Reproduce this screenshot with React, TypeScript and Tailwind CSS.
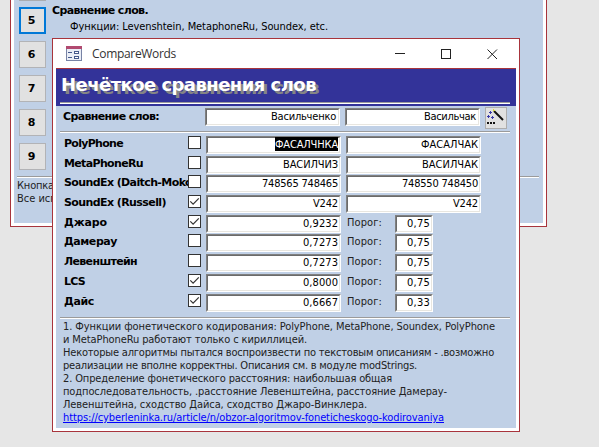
import { useLayoutEffect, useRef, type ReactNode } from 'react';

// A single line of text whose tracking is adjusted to fill the given width.
function Line({ w, children, className = '' }: { w: number; children: string; className?: string }) {
  const ref = useRef<HTMLSpanElement>(null);
  useLayoutEffect(() => {
    const el = ref.current;
    if (!el) return;
    el.style.letterSpacing = '0px';
    const natural = el.getBoundingClientRect().width;
    el.style.letterSpacing = `${(w - natural) / children.length}px`;
  }, [w, children]);
  return (
    <span ref={ref} className={`inline-block whitespace-pre ${className}`}>
      {children}
    </span>
  );
}

function Rule({ className = '' }: { className?: string }) {
  return <div className={`h-[2px] shrink-0 border-t border-[#9b9b9b] bg-white ${className}`} />;
}

function Field({ className, children }: { className: string; children: ReactNode }) {
  return (
    <div className={`h-[18px] shrink-0 border border-t-[#808080] border-l-[#808080] border-r-white border-b-white ${className}`}>
      <div className="flex h-full justify-end border border-t-[#6b6b6b] border-l-[#6b6b6b] border-r-[#e8e6e0] border-b-[#e8e6e0] bg-white pr-px leading-[14px]">
        {children}
      </div>
    </div>
  );
}

function Check({ on }: { on: boolean }) {
  return (
    <div className="h-[13px] w-[13px] shrink-0 border border-[#333] bg-white">
      {on && (
        <svg viewBox="0 0 11 11" className="block h-[11px] w-[11px]">
          <path d="M1.3 5.4 4.1 8.2 9.8 2.3" fill="none" stroke="#333" strokeWidth="1.2" />
        </svg>
      )}
    </div>
  );
}

type Item = {
  label: string;
  lw: number;
  on: boolean;
  value: string;
  vw: number;
  other?: string;
  ow?: number;
  threshold?: string;
  rowClass: string;
};

const items: Item[] = [
  { label: 'PolyPhone', lw: 59, on: false, value: 'ФАСАЛЧНКА', vw: 63, other: 'ФАСАЛЧАК', ow: 57, rowClass: 'h-[20px]' },
  { label: 'MetaPhoneRu', lw: 79, on: false, value: 'ВАСИЛЧИЗ', vw: 55, other: 'ВАСИЛЧАК', ow: 56, rowClass: 'h-[19px]' },
  { label: 'SoundEx (Daitch-Moko', lw: 128, on: false, value: '748565 748465', vw: 76, other: '748550 748450', ow: 76, rowClass: 'h-[20px]' },
  { label: 'SoundEx (Russell)', lw: 102, on: true, value: 'V242', vw: 25, other: 'V242', ow: 25, rowClass: 'h-[20px]' },
  { label: 'Джаро', lw: 43, on: true, value: '0,9232', vw: 35, threshold: '0,75', rowClass: 'h-[19px]' },
  { label: 'Дамерау', lw: 53, on: false, value: '0,7273', vw: 35, threshold: '0,75', rowClass: 'h-[20px]' },
  { label: 'Левенштейн', lw: 73, on: false, value: '0,7273', vw: 35, threshold: '0,75', rowClass: 'h-[20px]' },
  { label: 'LCS', lw: 21, on: true, value: '0,8000', vw: 35, threshold: '0,75', rowClass: 'h-[20px]' },
  { label: 'Дайс', lw: 30, on: true, value: '0,6667', vw: 35, threshold: '0,33', rowClass: 'h-[20px]' },
];

const notes: [string, number][] = [
  ['1. Функции фонетического кодирования: PolyPhone, MetaPhone, Soundex, PolyPhone', 432],
  ['и MetaPhoneRu работают только с кириллицей.', 244],
  ['Некоторые алгоритмы пытался воспроизвести по текстовым описаниям - .возможно', 431],
  ['реализации не вполне корректны. Описания см. в модуле modStrings.', 354],
  ['2. Определение фонетического расстояния: наибольшая общая', 329],
  ['подпоследовательность, .расстояние Левенштейна, расстояние Дамерау-', 384],
  ['Левенштейна, сходство Дайса, сходство Джаро-Винклера.', 304],
];

const bold = "font-['DejaVu_Sans',sans-serif] font-bold [font-stretch:normal]";

function MenuWindow() {
  return (
    <div className="absolute top-0 left-[10px] h-[227px] w-[537px] border-x border-b border-[#a8343c] bg-white px-[3px] pb-[3px]">
      <div className="h-full bg-[#c0d0e6]">
        <div className="flex h-[176px]">
          <div className="ml-[5px] w-[27px] shrink-0">
            <div className="h-px bg-[#a9acb1]" />
            <div className="mt-[6px] flex flex-col gap-[7px]">
              {['5', '6', '7', '8', '9'].map((n) => (
                <div
                  key={n}
                  className={`flex h-[27px] w-[27px] items-center justify-center pt-px pr-[2px] ${bold} ${
                    n === '5' ? 'border-2 border-[#0078d7] bg-[#e1e1e1]' : 'border border-[#b2b3b6] bg-[#e1e1e1]'
                  }`}
                >
                  {n}
                </div>
              ))}
            </div>
          </div>
          <div className="pt-[4px] pl-[6px] leading-[14px]">
            <div className={`h-[16px] ${bold}`}>
              <Line w={96}>Сравнение слов.</Line>
            </div>
            <div className="pl-[18px]">
              <Line w={258}>Функции: Levenshtein, MetaphoneRu, Soundex, etc.</Line>
            </div>
          </div>
        </div>
        <Rule className="mr-[4px] ml-[3px]" />
        <div className="pt-px pl-[3px] leading-[13px] text-[#222]">
          <div>
            <Line w={37}>Кнопка</Line>
          </div>
          <div>
            <Line w={46}>Все испр</Line>
          </div>
        </div>
      </div>
    </div>
  );
}

function TitleBar() {
  return (
    <div className="flex h-[29px] shrink-0 items-center bg-white">
      <svg viewBox="0 0 16 15" className="ml-[10px] h-[15px] w-[16px]" shapeRendering="crispEdges">
        <rect x="0.5" y="0.5" width="15" height="14" fill="#e9edf6" stroke="#7883a5" />
        <rect x="0" y="0" width="16" height="3" fill="#b14a70" />
        <path d="M2 6.5h4M2 11.5h4" stroke="#46598c" />
        <rect x="8.5" y="5.5" width="4" height="2" fill="#fff" stroke="#46598c" />
        <rect x="8.5" y="10.5" width="4" height="2" fill="#fff" stroke="#46598c" />
      </svg>
      <div className="ml-[10px] font-['Open_Sans',sans-serif] text-[12px] leading-[16px] text-[#333] [font-stretch:normal]">
        <Line w={84}>CompareWords</Line>
      </div>
      <svg viewBox="0 0 104 12" className="mr-[17px] ml-auto h-[12px] w-[104px]" fill="none" stroke="#222">
        <path d="M0 5.5h10" />
        <rect x="46.5" y="1.5" width="9" height="9" />
        <path d="M92.5 1.5l9.5 9.5M102 1.5l-9.5 9.5" />
      </svg>
    </div>
  );
}

function CompareWindow() {
  return (
    <div className="absolute top-[38px] left-[52px] flex h-[394px] w-[468px] flex-col border border-[#a8343c] bg-white px-[3px] pb-[3px]">
      <TitleBar />
      <div className="flex h-[38px] shrink-0 flex-col border-t border-[#a8343c] bg-[#333399] px-[4px]">
        <div className={`h-[33px] pt-[4px] pl-px text-[18px] leading-[24px] text-white [text-shadow:3px_3px_0_#858585] ${bold}`}>
          <Line w={255}>Нечёткое сравнения слов</Line>
        </div>
        <Rule className="mr-[2px]" />
      </div>
      <div className="grow bg-[#c0d0e6] pr-[6px] pl-[4px]">
        <div className="flex h-[25px] pt-[2px]">
          <div className={`w-[145px] pt-[2px] pl-[3px] leading-[14px] ${bold}`}>
            <Line w={96}>Сравнение слов:</Line>
          </div>
          <Field className="w-[135px]">
            <Line w={66} className="pr-px">Васильченко</Line>
          </Field>
          <Field className="ml-[5px] w-[135px]">
            <Line w={53} className="pr-px">Васильчак</Line>
          </Field>
          <div className="-mt-px ml-[5px] h-[22px] w-[22px] border border-[#adadad] bg-[#e1e1e1]">
            <svg viewBox="0 0 20 20" className="h-[20px] w-[20px]" shapeRendering="crispEdges">
              <path d="M8 3l9 9" stroke="#111" strokeWidth="2" shapeRendering="auto" />
              <path d="M7 1.5l1.500 1.500" stroke="#d8d83c" strokeWidth="1.5" />
              <path d="M3 4.500h3M4.500 3v3M1 8.500h3M2.500 7v3M5 9.500h3M6.500 8v3" stroke="#3838a8" />
              <path d="M1 15h2M4 15h2M7 15h2" stroke="#111" strokeWidth="2" />
            </svg>
          </div>
        </div>
        <Rule />
        <div className="pt-[3px]">
          {items.map((it, i) => (
            <div key={it.label} className={`flex ${it.rowClass}`}>
              <div className={`w-[128px] shrink-0 overflow-hidden pt-px pl-[4px] leading-[14px] ${bold}`}>
                <Line w={it.lw}>{it.label}</Line>
              </div>
              <Check on={it.on} />
              <Field className="ml-[5px] w-[135px]">
                {i === 0 ? (
                  <span className="-mt-px h-[14px] bg-black pt-px leading-[14px] text-white">
                    <Line w={it.vw}>{it.value}</Line>
                  </span>
                ) : (
                  <Line w={it.vw}>{it.value}</Line>
                )}
              </Field>
              {it.other ? (
                <Field className="ml-[5px] w-[135px]">
                  <Line w={it.ow ?? 50}>{it.other}</Line>
                </Field>
              ) : (
                <>
                  <div className="w-[54px] shrink-0 pt-px pl-[6px] leading-[14px] text-[#222]">
                    <Line w={35}>Порог:</Line>
                  </div>
                  <Field className="w-[38px]">
                    <Line w={23}>{it.threshold ?? ''}</Line>
                  </Field>
                </>
              )}
            </div>
          ))}
        </div>
        <Rule className="mt-[3px]" />
        <div className="pt-px pl-[3px] leading-[13px] text-[#222]">
          {notes.map(([text, w]) => (
            <div key={text} className="h-[13px]">
              <Line w={w}>{text}</Line>
            </div>
          ))}
          <div className="h-[13px] text-[#0000ff]">
            <Line w={381} className="underline">https://cyberleninka.ru/article/n/obzor-algoritmov-foneticheskogo-kodirovaniya</Line>
          </div>
        </div>
      </div>
    </div>
  );
}

export default function App() {
  return (
    <div className="relative h-[447px] w-[599px] overflow-hidden bg-[#e6e6e6] font-['DejaVu_Sans_Condensed','DejaVu_Sans',sans-serif] text-[11px] text-black [font-stretch:condensed]">
      <MenuWindow />
      <CompareWindow />
    </div>
  );
}
